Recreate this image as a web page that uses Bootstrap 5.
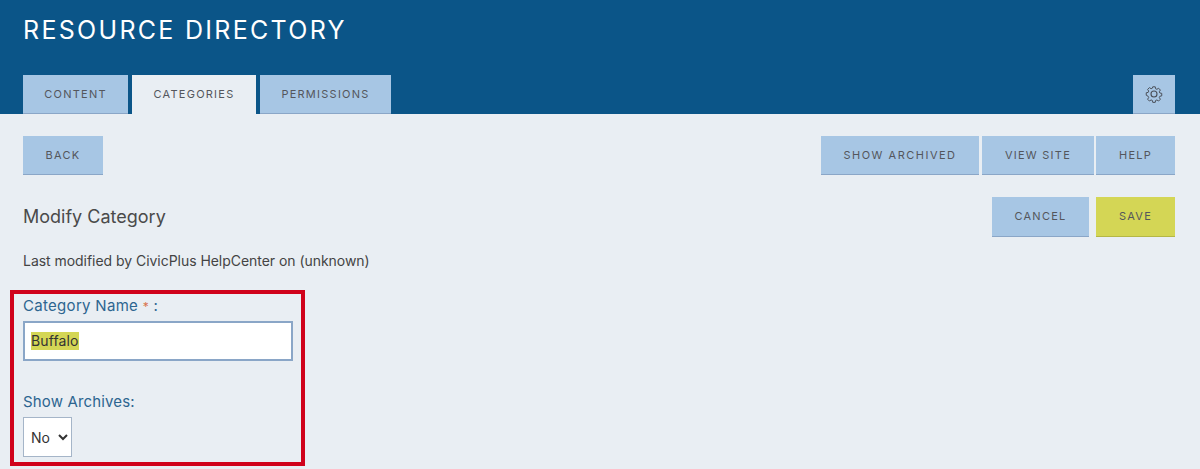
<!DOCTYPE html>
<html lang="en">
<head>
<meta charset="utf-8">
<title>Resource Directory</title>
<link href="https://cdn.jsdelivr.net/npm/bootstrap@5.3.0/dist/css/bootstrap.min.css" rel="stylesheet">
<style>
html, body { height: 469px; overflow: hidden; }
body { background: #e9eef3; font-family: Inter, "Noto Sans", sans-serif; color: #3d3d3d; font-size: 14px; }
.top-band { background: #0b5588; height: 114px; padding: 0 25px 0 23px; }
.page-title { color: #fff; font-size: 25px; font-weight: 400; letter-spacing: 2.3px; line-height: 30px; margin: 0; padding-top: 15px; height: 75px; }
.tab-row { gap: 4px; height: 39px; }
.tab-item, .act-btn { background: #a7c6e4; color: #54565c; font-size: 11px; letter-spacing: 1.25px; text-transform: uppercase; border: 0; border-bottom: 1px solid #8aa6c7; border-radius: 0; padding: 0; display: flex; align-items: center; justify-content: center; }
.tab-item { height: 39px; }
.tab-item.is-current { background: #e9eef3; border-bottom-color: #e9eef3; }
.w-content { width: 105px; } .w-categories { width: 124px; } .w-permissions { width: 131px; } .w-gear { width: 42px; }
.action-row { padding: 22px 25px 0 23px; height: 61px; }
.act-btn { height: 39px; }
.w-back { width: 80px; } .w-archived { width: 158px; letter-spacing: 1.5px; } .w-site { width: 112px; } .w-help { width: 79px; }
.btn-gap-a { gap: 3px; } .btn-gap-b { gap: 2px; }
.title-row { padding: 22px 25px 0 23px; height: 62px; }
.title-row .act-btn { height: 40px; }
.w-cancel { width: 97px; } .w-save { width: 79px; }
.act-btn.is-save { background: #d4d655; border-bottom-color: #b5b745; }
.btn-gap-c { gap: 7px; }
.sub-title { font-size: 18px; font-weight: 400; color: #4a4a4a; margin: 0; line-height: 40px; }
.modified-line { padding: 14px 0 0 23px; height: 53px; line-height: 20px; font-size: 14px; letter-spacing: -.04px; color: #444; }
.red-frame { margin-left: 10px; width: 295px; height: 176px; border: 4px solid #d0021b; padding: 2px 0 0 9px; }
.field-label { color: #2d6590; font-size: 15px; line-height: 20px; margin: 0 0 4px 0; display: block; letter-spacing: .3px; }
.req-mark { color: #d9734e; font-size: 12px; }
.name-input { display: block; width: 270px; height: 40px; border: 2px solid #8aa6c7; background: #fff; padding: 0 6px; font-size: 14px; line-height: 36px; color: #333; margin-bottom: 31px; }
.name-input span { background: #d4d655; display: inline-block; line-height: 18px; letter-spacing: .12px; }
.field-label.label-gap { margin-bottom: 5px; letter-spacing: .15px; }
.archive-select { display: block; width: 49px; height: 40px; border: 1px solid #a5b5c8; background: #fff; font: inherit; font-size: 14px; color: #333; padding: 0 0 0 3px; border-radius: 0; }
</style>
</head>
<body>
<header class="top-band">
  <h1 class="page-title">RESOURCE DIRECTORY</h1>
  <div class="d-flex justify-content-between">
    <nav class="d-flex tab-row">
      <a class="tab-item w-content text-decoration-none" href="#">Content</a>
      <a class="tab-item w-categories is-current text-decoration-none" href="#">Categories</a>
      <a class="tab-item w-permissions text-decoration-none" href="#">Permissions</a>
    </nav>
    <button type="button" class="tab-item w-gear" aria-label="Settings">
      <svg width="18" height="18" viewBox="0 0 18 18" fill="none" stroke="#4a4f58" stroke-width="1.1" stroke-linejoin="round"><circle cx="9" cy="9" r="3"/><path d="M7.6 1h2.8l.4 2.2 1.4.6 1.9-1.2 2 2-1.2 1.9.6 1.4 2.1.4v2.8l-2.1.4-.6 1.4 1.2 1.9-2 2-1.9-1.2-1.4.6-.4 2.1H7.6l-.4-2.1-1.4-.6-1.9 1.2-2-2 1.2-1.9-.6-1.4L.4 10.4V7.6l2.1-.4.6-1.4-1.2-1.9 2-2 1.9 1.2 1.4-.6z" transform="translate(.9 .9) scale(.9)"/></svg>
    </button>
  </div>
</header>
<div class="d-flex justify-content-between action-row">
  <a class="act-btn w-back text-decoration-none" href="#">Back</a>
  <div class="d-flex btn-gap-a">
    <a class="act-btn w-archived text-decoration-none" href="#">Show Archived</a>
    <div class="d-flex btn-gap-b">
      <a class="act-btn w-site text-decoration-none" href="#">View Site</a>
      <a class="act-btn w-help text-decoration-none" href="#">Help</a>
    </div>
  </div>
</div>
<div class="d-flex justify-content-between title-row">
  <h2 class="sub-title">Modify Category</h2>
  <div class="d-flex btn-gap-c">
    <a class="act-btn w-cancel text-decoration-none" href="#">Cancel</a>
    <a class="act-btn w-save is-save text-decoration-none" href="#">Save</a>
  </div>
</div>
<p class="modified-line mb-0">Last modified by CivicPlus HelpCenter on (unknown)</p>
<section class="red-frame">
  <span class="field-label">Category Name <span class="req-mark">*</span> :</span>
  <div class="name-input"><span>Buffalo</span></div>
  <label class="field-label label-gap" for="arch">Show Archives:</label>
  <select id="arch" class="archive-select"><option>No</option><option>Yes</option></select>
</section>
<script src="https://cdn.jsdelivr.net/npm/bootstrap@5.3.0/dist/js/bootstrap.bundle.min.js"></script>
</body>
</html>
